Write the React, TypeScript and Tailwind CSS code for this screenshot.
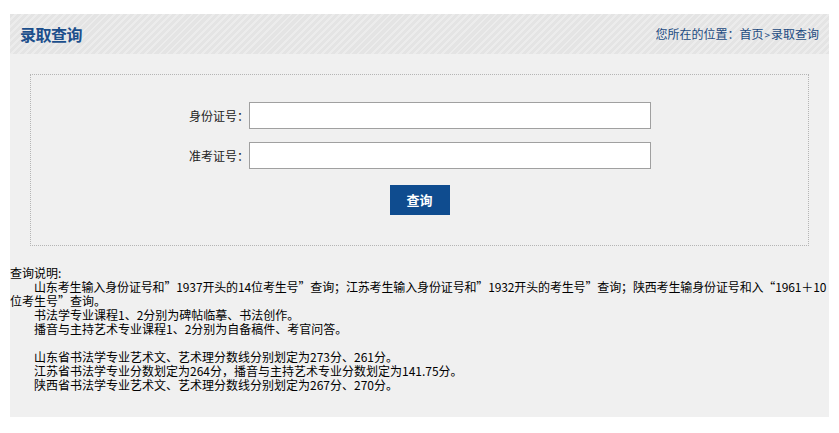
const notes = [
  { text: "查询说明:", indent: false, tight: false },
  {
    text: "山东考生输入身份证号和”1937开头的14位考生号”查询；江苏考生输入身份证号和”1932开头的考生号”查询；陕西考生输身份证号和入“1961＋10",
    indent: true,
    tight: true,
  },
  { text: "位考生号”查询。", indent: false, tight: false },
  { text: "书法学专业课程1、2分别为碑帖临摹、书法创作。", indent: true, tight: false },
  { text: "播音与主持艺术专业课程1、2分别为自备稿件、考官问答。", indent: true, tight: false },
  { text: "\u00a0", indent: false, tight: false },
  { text: "山东省书法学专业艺术文、艺术理分数线分别划定为273分、261分。", indent: true, tight: false },
  { text: "江苏省书法学专业分数划定为264分，播音与主持艺术专业分数划定为141.75分。", indent: true, tight: false },
  { text: "陕西省书法学专业艺术文、艺术理分数线分别划定为267分、270分。", indent: true, tight: false },
];

const font = "font-['SimSun','Noto_Sans_CJK_SC',sans-serif]";

export default function App() {
  return (
    <div className={`w-[839px] h-[433px] bg-white pt-[14px] px-[10px] ${font}`}>
      <div className="w-[819px] h-[403px] bg-[#f0f0f0] flex flex-col">
        <div className="h-[40px] flex items-center justify-between pl-[10px] pr-[10px] bg-[repeating-linear-gradient(135deg,#e4e4e4_0px,#e4e4e4_3px,#ececec_3px,#ececec_5px)]">
          <h1 className="text-[16px] font-bold text-[#1c4f8c] tracking-[-0.5px]">录取查询</h1>
          <div className="text-[12px] text-[#1d4b82]">
            您所在的位置：首页<span className="text-[10px] px-[1px]">&gt;</span>录取查询
          </div>
        </div>

        <div className="mx-[20px] mt-[20px] h-[172px] border border-dotted border-[#b5b5b5] flex flex-col pt-[27px]">
          <div className="flex items-center h-[27px] pl-[158px]">
            <label className="w-[60px] shrink-0 whitespace-nowrap text-right text-[12px] text-[#222] pr-[2px]">身份证号：</label>
            <input className="w-[402px] h-[27px] bg-white border border-[#a0a0a0] outline-none" />
          </div>
          <div className="flex items-center h-[27px] mt-[13px] pl-[158px]">
            <label className="w-[60px] shrink-0 whitespace-nowrap text-right text-[12px] text-[#222] pr-[2px]">准考证号：</label>
            <input className="w-[402px] h-[27px] bg-white border border-[#a0a0a0] outline-none" />
          </div>
          <button className="mt-[16px] self-center w-[60px] h-[30px] bg-[#0f4c8f] text-white text-[13px] font-bold">
            查询
          </button>
        </div>

        <div className="mt-[20px] text-[12px] leading-[14px] text-black">
          {notes.map((n, i) => (
            <div
              key={i}
              className={`whitespace-nowrap ${n.indent ? "pl-[24px]" : ""} ${n.tight ? "tracking-[-0.14px]" : ""}`}
            >
              {n.text}
            </div>
          ))}
        </div>
      </div>
    </div>
  );
}
